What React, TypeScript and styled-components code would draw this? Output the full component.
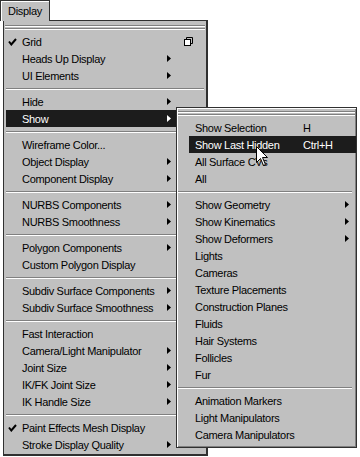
import React from 'react';
import styled, { createGlobalStyle } from 'styled-components';

const GlobalStyle = createGlobalStyle`
  html, body { margin: 0; padding: 0; background: #ffffff; }
  body {
    font-family: "Liberation Sans", Arial, sans-serif;
    font-size: 11px;
    letter-spacing: -0.3px;
  }
`;

const Page = styled.div`
  position: relative;
  width: 360px;
  height: 457px;
  overflow: hidden;
  background: #ffffff;
`;

const MenuBar = styled.div`
  display: flex;
  height: 20px;
`;

const Tab = styled.div`
  box-sizing: border-box;
  width: 50px;
  height: 21px;
  padding-left: 7px;
  padding-top: 1px;
  line-height: 19px;
  color: #000;
  background: #c0c0c0;
  border: 1px solid #303030;
  border-bottom: none;
  box-shadow: inset 1px 1px #ffffff;
`;

const MainMenu = styled.div`
  box-sizing: border-box;
  width: 205px;
  margin-left: 3px;
  background: #c0c0c0;
  border: 1px solid #303030;
  border-right-width: 2px;
  border-bottom-width: 2px;
  padding-bottom: 1px;
`;

const SubMenu = styled.div`
  position: absolute;
  left: 176px;
  top: 107px;
  box-sizing: border-box;
  width: 181px;
  background: #c0c0c0;
  border: 1px solid #303030;
  box-shadow: inset 1px 1px #ffffff, inset -1px -1px #808080;
  padding-bottom: 4px;
`;

const TearOff = styled.div<{ $h: number; $inset: string }>`
  height: ${(p) => p.$h}px;
  display: flex;
  flex-direction: column;
  justify-content: center;
  gap: 1px;
  margin: ${(p) => p.$inset};
`;

const Groove = styled.div`
  height: 0;
  border-top: 1px solid #808080;
  border-bottom: 1px solid #ffffff;
`;

const Separator = styled.div<{ $inset: string }>`
  height: 9px;
  display: flex;
  align-items: center;
  margin: ${(p) => p.$inset};
`;

const Row = styled.div<{ $active?: boolean }>`
  display: flex;
  align-items: center;
  height: 17px;
  white-space: nowrap;
  color: ${(p) => (p.$active ? '#ffffff' : '#000000')};
  background: ${(p) => (p.$active ? '#1c1c1c' : 'transparent')};
`;

const MainRow = styled(Row)`
  margin: 0 2px;
`;

const SubRow = styled(Row)`
  margin: 0 0 0 12px;
  padding-left: 6px;
`;

const CheckCell = styled.div`
  width: 16px;
  height: 17px;
  display: flex;
  align-items: center;
  padding-left: 2px;
  box-sizing: border-box;
`;

const Label = styled.div`
  flex: 1;
`;

const SubLabel = styled.div`
  width: 108px;
  flex: none;
`;

const Shortcut = styled.div`
  flex: 1;
`;

const ArrowCell = styled.div<{ $gap: number }>`
  width: 10px;
  display: flex;
  justify-content: flex-end;
  margin-right: ${(p) => p.$gap}px;
`;

const OptionCell = styled.div`
  width: 33px;
  height: 17px;
  display: flex;
  align-items: center;
  padding-left: 13px;
  box-sizing: border-box;
`;

const Cursor = styled.svg`
  position: absolute;
  left: 256px;
  top: 146px;
`;

type Entry =
  | { kind: 'sep' }
  | {
      kind: 'item';
      label: string;
      check?: boolean;
      sub?: boolean;
      option?: boolean;
      active?: boolean;
      shortcut?: string;
    };

const sep: Entry = { kind: 'sep' };
const item = (
  label: string,
  o: { check?: boolean; sub?: boolean; option?: boolean; active?: boolean; shortcut?: string } = {}
): Entry => ({ kind: 'item', label, ...o });

const mainItems: Entry[] = [
  item('Grid', { check: true, option: true }),
  item('Heads Up Display', { sub: true }),
  item('UI Elements', { sub: true }),
  sep,
  item('Hide', { sub: true }),
  item('Show', { sub: true, active: true }),
  sep,
  item('Wireframe Color...'),
  item('Object Display', { sub: true }),
  item('Component Display', { sub: true }),
  sep,
  item('NURBS Components', { sub: true }),
  item('NURBS Smoothness', { sub: true }),
  sep,
  item('Polygon Components', { sub: true }),
  item('Custom Polygon Display'),
  sep,
  item('Subdiv Surface Components', { sub: true }),
  item('Subdiv Surface Smoothness', { sub: true }),
  sep,
  item('Fast Interaction'),
  item('Camera/Light Manipulator', { sub: true }),
  item('Joint Size', { sub: true }),
  item('IK/FK Joint Size', { sub: true }),
  item('IK Handle Size', { sub: true }),
  sep,
  item('Paint Effects Mesh Display', { check: true }),
  item('Stroke Display Quality', { sub: true }),
];

const subItems: Entry[] = [
  item('Show Selection', { shortcut: 'H' }),
  item('Show Last Hidden', { shortcut: 'Ctrl+H', active: true }),
  item('All Surface CVs'),
  item('All'),
  sep,
  item('Show Geometry', { sub: true }),
  item('Show Kinematics', { sub: true }),
  item('Show Deformers', { sub: true }),
  item('Lights'),
  item('Cameras'),
  item('Texture Placements'),
  item('Construction Planes'),
  item('Fluids'),
  item('Hair Systems'),
  item('Follicles'),
  item('Fur'),
  sep,
  item('Animation Markers'),
  item('Light Manipulators'),
  item('Camera Manipulators'),
];

const Arrow = ({ color }: { color: string }) => (
  <svg width="4" height="7" viewBox="0 0 4 7">
    <polygon points="0,0 4,3.5 0,7" fill={color} />
  </svg>
);

const Check = () => (
  <svg width="9" height="8" viewBox="0 0 9 8">
    <polyline points="1,3.5 3.3,6.5 8,1" fill="none" stroke="#000" strokeWidth="2" />
  </svg>
);

const OptionBox = () => (
  <svg width="9" height="9" viewBox="0 0 9 9">
    <rect x="0.5" y="2.5" width="6" height="6" fill="#ffffff" stroke="#000" />
    <polyline points="2.5,2.5 2.5,0.5 8.5,0.5 8.5,6.5 6.5,6.5" fill="none" stroke="#000" />
  </svg>
);

export default function App() {
  return (
    <Page>
      <GlobalStyle />
      <MenuBar>
        <Tab>Display</Tab>
      </MenuBar>
      <MainMenu>
        <TearOff $h={12} $inset="0 1px">
          <Groove />
          <Groove />
        </TearOff>
        {mainItems.map((e, i) =>
          e.kind === 'sep' ? (
            <Separator key={i} $inset="0 2px">
              <Groove style={{ flex: 1 }} />
            </Separator>
          ) : (
            <MainRow key={i} $active={e.active}>
              <CheckCell>{e.check && <Check />}</CheckCell>
              <Label>{e.label}</Label>
              <ArrowCell $gap={0}>{e.sub && <Arrow color={e.active ? '#fff' : '#000'} />}</ArrowCell>
              <OptionCell>{e.option && <OptionBox />}</OptionCell>
            </MainRow>
          )
        )}
      </MainMenu>
      <SubMenu>
        <TearOff $h={11} $inset="0 1px">
          <Groove />
          <Groove />
        </TearOff>
        {subItems.map((e, i) =>
          e.kind === 'sep' ? (
            <Separator key={i} $inset="0 4px 0 1px">
              <Groove style={{ flex: 1 }} />
            </Separator>
          ) : (
            <SubRow key={i} $active={e.active}>
              <SubLabel>{e.label}</SubLabel>
              <Shortcut>{e.shortcut}</Shortcut>
              <ArrowCell $gap={7}>{e.sub && <Arrow color="#000" />}</ArrowCell>
            </SubRow>
          )
        )}
      </SubMenu>
      <Cursor width="13" height="21" viewBox="0 0 13 21">
        <path d="M0.5,0.5 L0.5,16.5 L4.5,12.5 L7.5,19.5 L9.5,18.5 L6.5,11.5 L11.5,11.5 Z" fill="#fff" stroke="#000" />
      </Cursor>
    </Page>
  );
}
